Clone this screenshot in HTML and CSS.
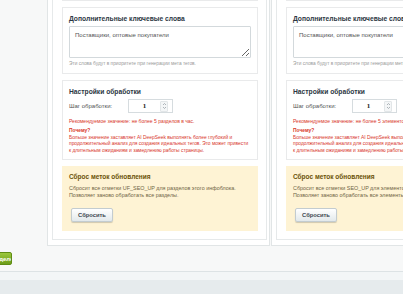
FILE: index.html
```html
<!DOCTYPE html>
<html lang="ru">
<head>
    <meta charset="UTF-8">
    <title>Настройки AI SEO</title>
    <link rel="stylesheet" href="styles.css">
</head>
<body>
    <div class="columns">
        <!-- Разделы -->
        <div class="column">
            <div class="panel">
                <div class="card card-tail"></div>
                <div class="card card-keywords">
                    <div class="card-title">Дополнительные ключевые слова</div>
                    <textarea class="keywords">Поставщики, оптовые покупатели</textarea>
                    <div class="hint">Эти слова будут в приоритете при генерации мета тегов.</div>
                </div>
                <div class="card">
                    <div class="card-title">Настройки обработки</div>
                    <div class="field">
                        <span class="field-label">Шаг обработки:</span>
                        <div class="stepper">
                            <span class="stepper-value">1</span>
                            <span class="stepper-arrows">
                                <svg width="5" height="8" viewBox="0 0 5 8"><path d="M1 3 L2.5 1.5 L4 3 M1 5 L2.5 6.5 L4 5" fill="none" stroke="#9aa3a8" stroke-width="0.8"/></svg>
                            </span>
                        </div>
                    </div>
                    <div class="warn">Рекомендуемое значение: не более 5 разделов в час.</div>
                    <div class="why">
                        <b>Почему?</b><br>
                        Больше значение заставляет AI DeepSeek выполнять более глубокий и продолжительный анализ для создания идеальных тегов. Это может привести к длительным ожиданиям и замедлению работы страницы.
                    </div>
                </div>
                <div class="notice">
                    <div class="notice-title">Сброс меток обновления</div>
                    <div class="notice-text">Сбросит все отметки UF_SEO_UP для разделов этого инфоблока.<br>Позволяет заново обработать все разделы.</div>
                    <button class="btn">Сбросить</button>
                </div>
            </div>
        </div>

        <!-- Элементы -->
        <div class="column">
            <div class="panel">
                <div class="card card-tail"></div>
                <div class="card card-keywords">
                    <div class="card-title">Дополнительные ключевые слова</div>
                    <textarea class="keywords">Поставщики, оптовые покупатели</textarea>
                    <div class="hint">Эти слова будут в приоритете при генерации мета тегов.</div>
                </div>
                <div class="card">
                    <div class="card-title">Настройки обработки</div>
                    <div class="field">
                        <span class="field-label">Шаг обработки:</span>
                        <div class="stepper">
                            <span class="stepper-value">1</span>
                            <span class="stepper-arrows">
                                <svg width="5" height="8" viewBox="0 0 5 8"><path d="M1 3 L2.5 1.5 L4 3 M1 5 L2.5 6.5 L4 5" fill="none" stroke="#9aa3a8" stroke-width="0.8"/></svg>
                            </span>
                        </div>
                    </div>
                    <div class="warn">Рекомендуемое значение: не более 5 элементов в час.</div>
                    <div class="why">
                        <b>Почему?</b><br>
                        Больше значение заставляет AI DeepSeek выполнять более глубокий и продолжительный анализ для создания идеальных тегов. Это может привести к длительным ожиданиям и замедлению работы страницы.
                    </div>
                </div>
                <div class="notice">
                    <div class="notice-title">Сброс меток обновления</div>
                    <div class="notice-text">Сбросит все отметки SEO_UP для элементов этого инфоблока.<br>Позволяет заново обработать все элементы.</div>
                    <button class="btn">Сбросить</button>
                </div>
            </div>
        </div>
    </div>

    <div class="footer">
        <button class="btn-save">Обработать разделов</button>
    </div>
    <div class="footer-gap"></div>
    <div class="page-bottom"></div>
</body>
</html>
```

FILE: styles.css
```css
body {
    margin: 0;
    height: 294px;
    overflow: hidden;
    background-color: #f7f8f8;
    font-family: 'Liberation Sans', Arial, sans-serif;
    color: #333;
}

.columns {
    display: flex;
    align-items: flex-start;
    gap: 1px;
    padding-left: 47px;
    margin-top: -34px;
}

.column {
    flex: none;
    width: 223px;
    box-sizing: border-box;
    background-color: #fff;
    border: 1px solid #e1e5e6;
    padding: 5px 2px 5px 4px;
}

.panel {
    border: 1px solid #e6e9ea;
    padding: 8px 8px 8px 9px;
}

.card {
    background-color: #fff;
    border: 1px solid #e9eaeb;
    padding: 6px 6px 5px;
    margin-bottom: 6px;
}

.card-tail {
    height: 20px;
    box-sizing: border-box;
    padding: 0;
}

.card-keywords {
    padding-bottom: 6px;
}

.card-title {
    font-size: 6.7px;
    line-height: 9px;
    font-weight: bold;
    color: #2b3642;
    margin-bottom: 3px;
}

.keywords {
    display: block;
    width: 100%;
    height: 32px;
    box-sizing: border-box;
    margin: 0;
    padding: 5px 5px;
    border: 1px solid #d3d9dc;
    border-radius: 1px;
    font-family: 'Liberation Sans', Arial, sans-serif;
    font-size: 6px;
    line-height: 7px;
    color: #555;
    resize: vertical;
}

.hint {
    margin-top: 2px;
    font-size: 4.8px;
    line-height: 7px;
    color: #9a9a9a;
}

.field {
    display: flex;
    align-items: center;
    height: 14px;
}

.field-label {
    width: 59px;
    flex: none;
    font-size: 6px;
    color: #555;
}

.stepper {
    display: flex;
    align-items: center;
    width: 45px;
    height: 14px;
    box-sizing: border-box;
    border: 1px solid #d6dcdf;
    background-color: #fff;
}

.stepper-value {
    flex: 1;
    text-align: center;
    font-family: 'Liberation Serif', serif;
    font-weight: bold;
    font-size: 7px;
    color: #222;
}

.stepper-arrows {
    display: flex;
    align-items: center;
    justify-content: center;
    width: 6px;
    height: 9px;
    margin-right: 4px;
    border: 1px solid #e2e6e8;
    border-radius: 1px;
    background-color: #f4f6f7;
}

.warn {
    margin-top: 5px;
    font-size: 5px;
    line-height: 7px;
    color: #d8372b;
}

.why {
    margin-top: 3px;
    font-size: 4.9px;
    line-height: 6.5px;
    color: #d8372b;
}

.notice {
    background-color: #fef3d4;
    padding: 6px 7px 9px;
}

.notice-title {
    font-size: 6.5px;
    line-height: 9px;
    font-weight: bold;
    color: #6b5208;
    margin-bottom: 4px;
}

.notice-text {
    font-size: 5.4px;
    line-height: 7px;
    color: #6f6444;
}

.btn {
    display: block;
    margin: 9px 0 0 2px;
    width: 42px;
    height: 14px;
    padding: 0;
    border: 1px solid #c3ccd0;
    border-radius: 2px;
    background: linear-gradient(#ffffff, #e3e9eb);
    box-shadow: 0 1px 1px rgba(0, 0, 0, 0.18);
    font-family: 'Liberation Sans', Arial, sans-serif;
    font-size: 5.8px;
    font-weight: bold;
    color: #3c4750;
}

.footer {
    padding: 6px 0;
    border-bottom: 1px solid #dde3e5;
}

.btn-save {
    display: block;
    width: 64px;
    height: 13px;
    margin-left: -52px;
    padding: 0 3px;
    border: 1px solid #5f8c14;
    border-radius: 2px;
    background: linear-gradient(#9bc73c, #6c9d19);
    text-align: right;
    white-space: nowrap;
    overflow: hidden;
    font-family: 'Liberation Sans', Arial, sans-serif;
    font-size: 6px;
    font-weight: bold;
    color: #fff;
}

.footer-gap {
    height: 8px;
    background-color: #f3f6f7;
}

.page-bottom {
    height: 40px;
    background-color: #e6ebed;
}
```
